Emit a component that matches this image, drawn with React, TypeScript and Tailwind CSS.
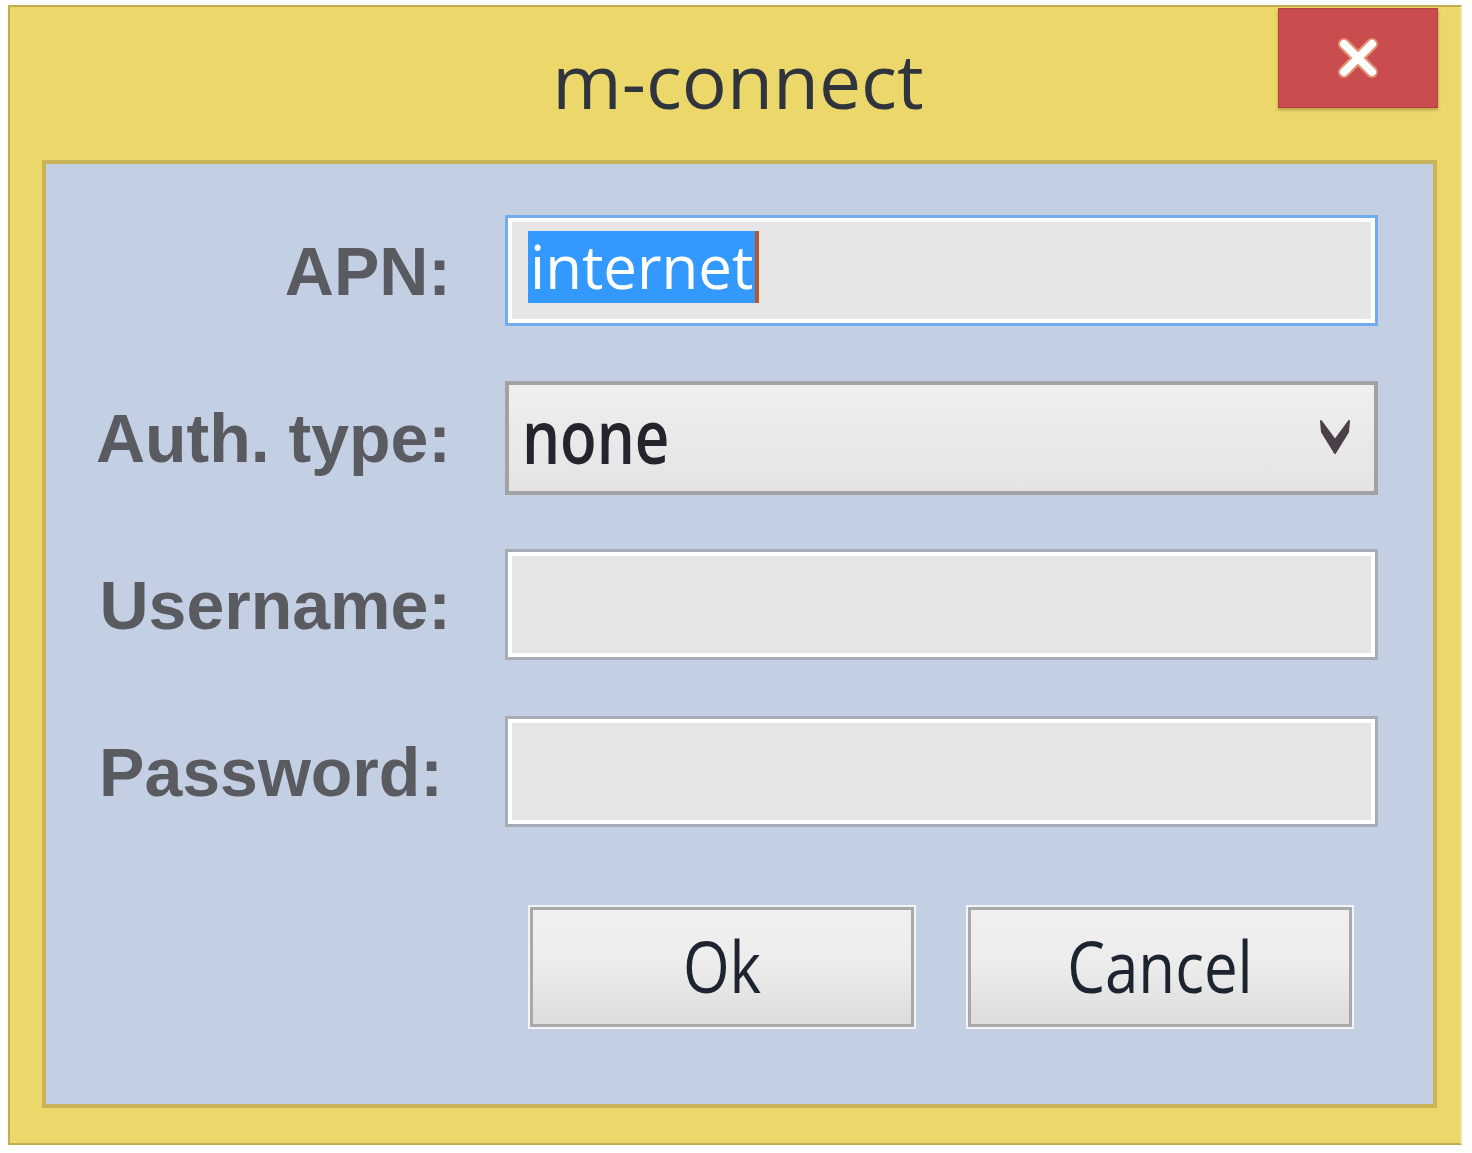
import React from "react";

const labelCls =
  "w-[405px] shrink-0 text-right text-[68px] font-bold text-[#5a5b61] leading-none [font-family:'Liberation_Sans',Arial,sans-serif]";

function Field() {
  return (
    <div className="ml-[54px] w-[873px] h-full border-[3px] border-[#a8abb4] bg-white p-[4px]">
      <div className="w-full h-full bg-[#e5e5e5]" />
    </div>
  );
}

export default function App() {
  return (
    <div className="w-[1472px] h-[1153px] bg-white overflow-hidden">
      <div className="relative ml-[8px] mt-[5px] w-[1454px] h-[1140px] border-2 border-[#c4ad4e] border-r-[#efe3a0] bg-[#ecd86a] flex flex-col">
        {/* title bar */}
        <div className="h-[153px] shrink-0 flex items-center justify-center pl-[6px]">
          <span className="text-[75px] leading-none text-[#30353d] [font-family:'Open_Sans',sans-serif] -mt-[6px]">
            m-connect
          </span>
        </div>
        {/* close button */}
        <div className="absolute top-[1px] right-[22px] w-[160px] h-[100px] bg-[#c94d4e] border border-[#b0443f] shadow-[0_2px_3px_rgba(120,90,30,0.45)] flex items-center justify-center">
          <svg width="44" height="44" viewBox="0 0 44 44">
            <g strokeLinecap="round">
              <line x1="8" y1="8" x2="36" y2="36" stroke="#e59070" strokeWidth="12" />
              <line x1="36" y1="8" x2="8" y2="36" stroke="#e59070" strokeWidth="12" />
              <line x1="8" y1="8" x2="36" y2="36" stroke="#ffffff" strokeWidth="8" />
              <line x1="36" y1="8" x2="8" y2="36" stroke="#ffffff" strokeWidth="8" />
            </g>
          </svg>
        </div>
        {/* content panel */}
        <div className="ml-[32px] w-[1395px] h-[948px] border-4 border-[#c9b356] bg-[#c3cfe2] pt-[51px] flex flex-col">
          <div className="flex flex-col gap-[56px]">
            {/* APN */}
            <div className="flex items-center h-[111px]">
              <div className={labelCls}>APN:</div>
              <div className="ml-[54px] w-[873px] h-full border-[3px] border-[#72abee] bg-white p-[4px]">
                <div className="w-full h-full bg-[#e6e6e6] flex items-center pl-[16px] pb-[8px]">
                  <span className="inline-block h-[72px] leading-[70px] bg-[#3399ff] text-white text-[60px] px-[2px] [font-family:'Open_Sans',sans-serif]">
                    internet
                  </span>
                  <span className="inline-block w-[4px] h-[72px] bg-[#b4582c]" />
                </div>
              </div>
            </div>
            {/* Auth type */}
            <div className="flex items-center h-[111px]">
              <div className={labelCls}>Auth. type:</div>
              <div className="ml-[54px] w-[873px] h-[114px] border-4 border-[#a2a2a4] bg-gradient-to-b from-[#efefef] to-[#e4e4e4] flex items-center justify-between pl-[13px] pr-[20px]">
                <span className="inline-block scale-y-[1.25] text-[60px] leading-none font-semibold text-[#23242c] [font-family:'Open_Sans',sans-serif] -mt-[6px]">
                  none
                </span>
                <svg width="38" height="40" viewBox="0 0 38 40">
                  <path d="M5 3 L6 14 L19 35 L32 14 L33 3 L19 22 Z" fill="#4c4048" stroke="#4c4048" strokeWidth="2" strokeLinejoin="round" />
                </svg>
              </div>
            </div>
            {/* Username */}
            <div className="flex items-center h-[111px]">
              <div className={labelCls}>Username:</div>
              <Field />
            </div>
            {/* Password */}
            <div className="flex items-center h-[111px]">
              <div className={labelCls + " pr-[8px] text-[67px]"}>Password:</div>
              <Field />
            </div>
          </div>
          {/* buttons */}
          <div className="flex gap-[54px] ml-[484px] mt-[80px]">
            {["Ok", "Cancel"].map((t) => (
              <div
                key={t}
                className="w-[384px] h-[120px] border-[3px] border-[#a9a9a9] shadow-[0_0_0_2px_#f2f4f8] bg-gradient-to-b from-[#f0f0f0] via-[#ececec] to-[#dcdcdc] flex items-center justify-center"
              >
                <span className="inline-block scale-y-[1.2] text-[60px] leading-none text-[#1e2330] [font-family:'Open_Sans',sans-serif] -mt-[4px]">
                  {t}
                </span>
              </div>
            ))}
          </div>
        </div>
      </div>
    </div>
  );
}
